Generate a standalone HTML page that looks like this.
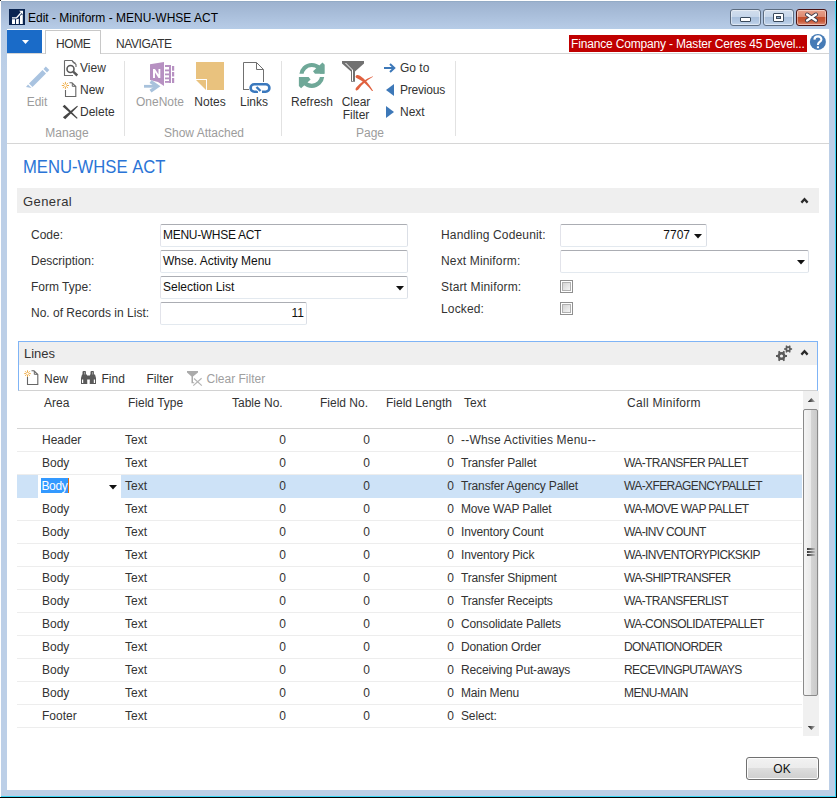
<!DOCTYPE html><html><head><meta charset="utf-8"><style>
html,body{margin:0;padding:0;width:837px;height:798px;overflow:hidden;background:#fff}
body{position:relative;font-family:"Liberation Sans",sans-serif}
body>div,body>svg{position:absolute}
.t{white-space:nowrap}
</style></head><body>
<div style="left:0px;top:0px;width:837px;height:798px;background:#fff"></div>
<div style="left:836px;top:0px;width:1px;height:798px;background:#000"></div>
<div style="left:0px;top:797px;width:837px;height:1px;background:#000"></div>
<div style="left:835px;top:1px;width:1px;height:796px;background:#3ad6f5"></div>
<div style="left:1px;top:796px;width:835px;height:1px;background:#3ad6f5"></div>
<div style="left:0px;top:0px;width:1px;height:1px;background:#222"></div>
<div style="left:1px;top:1px;width:834px;height:795px;background:#bccfe7"></div>
<div style="left:1px;top:1px;width:834px;height:28px;background:linear-gradient(#93abc6 0,#93abc6 1px,#9db2cf 1px,#b6cbe6 27px,#b3cde8 28px)"></div>
<div style="left:1px;top:29px;width:6px;height:40px;background:linear-gradient(#b7cce6,#bccfe7)"></div>
<div style="left:829px;top:29px;width:6px;height:40px;background:linear-gradient(#b7cce6,#bccfe7)"></div>
<div style="left:7px;top:29px;width:822px;height:761px;background:#fff"></div>
<svg style="left:9px;top:9px" width="16" height="16" viewBox="0 0 16 16">
<rect width="16" height="16" fill="#0a2450"/>
<rect x="3" y="10" width="3" height="5" fill="#fff"/><rect x="7" y="9.8" width="2.8" height="5.2" fill="#fff"/><rect x="11" y="5.5" width="2.8" height="9.5" fill="#fff"/>
<path d="M3 9 H7.6 L12.5 3.5" stroke="#0a2450" stroke-width="2.6" fill="none"/><path d="M3 8.8 H7.6 L12.5 3.3" stroke="#fff" stroke-width="1.3" fill="none"/><path d="M10.2 1.8 H14 V5.6 Z" fill="#fff"/></svg>
<div class="t" style="left:28px;top:12px;font-size:12px;line-height:12px;color:#000;">Edit - Miniform - MENU-WHSE ACT</div>
<div style="left:730px;top:9px;width:31px;height:17px;background:linear-gradient(#d2deed 0,#c6d6ea 45%,#a9c0dc 50%,#b4c9e3 80%,#c6d8ee 100%);border:1px solid #5c6c80;border-radius:3px;box-sizing:border-box;box-shadow:inset 0 0 0 1px rgba(255,255,255,0.45)"></div>
<div style="left:763px;top:9px;width:31px;height:17px;background:linear-gradient(#d2deed 0,#c6d6ea 45%,#a9c0dc 50%,#b4c9e3 80%,#c6d8ee 100%);border:1px solid #5c6c80;border-radius:3px;box-sizing:border-box;box-shadow:inset 0 0 0 1px rgba(255,255,255,0.45)"></div>
<div style="left:796px;top:9px;width:31px;height:17px;background:linear-gradient(#e8a08a 0,#dc8a72 45%,#c4502e 50%,#c85a3a 75%,#e0907a 100%);border:1px solid #4a1414;border-radius:3px;box-sizing:border-box;box-shadow:inset 0 0 0 1px rgba(255,255,255,0.45)"></div>
<div style="left:740px;top:17px;width:11px;height:5px;background:#fff;border:1px solid #3a4a5c;border-radius:1px;box-sizing:border-box"></div>
<div style="left:773px;top:13px;width:11px;height:9px;background:#fff;border:1px solid #3a4a5c;border-radius:1px;box-sizing:border-box"></div>
<div style="left:776px;top:16px;width:5px;height:3px;background:#8aa8c8;border:1px solid #3a4a5c;box-sizing:border-box"></div>
<svg style="left:803px;top:11px" width="17" height="13" viewBox="0 0 17 13"><path d="M4 3.5 L13 9.5 M13 3.5 L4 9.5" stroke="#3a3a4a" stroke-width="4" stroke-linecap="round"/><path d="M4 3.5 L13 9.5 M13 3.5 L4 9.5" stroke="#fff" stroke-width="2.2" stroke-linecap="round"/></svg>
<div style="left:7px;top:30px;width:35px;height:23px;background:#1a6bc8"></div>
<svg style="left:21px;top:39px" width="9" height="6" viewBox="0 0 9 6"><path d="M1 1 L8 1 L4.5 5 Z" fill="#fff"/></svg>
<div style="left:7px;top:53px;width:822px;height:1px;background:#d4d4d4"></div>
<div style="left:45px;top:30px;width:56px;height:24px;background:#fff;border:1px solid #c8c8c8;border-bottom:none;box-sizing:border-box"></div>
<div class="t" style="left:56px;top:38px;font-size:12px;line-height:12px;color:#333;letter-spacing:-0.4px">HOME</div>
<div class="t" style="left:116px;top:38px;font-size:12px;line-height:12px;color:#333;letter-spacing:-0.4px">NAVIGATE</div>
<div style="left:569px;top:35px;width:238px;height:17px;background:#c00000"></div>
<div class="t" style="left:571px;top:38px;font-size:12px;line-height:12px;color:#fff;letter-spacing:-0.17px">Finance Company - Master Ceres 45 Devel...</div>
<svg style="left:809px;top:33px" width="18" height="18" viewBox="0 0 18 18"><circle cx="8.9" cy="8.9" r="8" fill="#467bb6"/>
<path d="M5.4 6.6 C5.5 4.5 7 3.4 9 3.4 C11.1 3.4 12.4 4.6 12.4 6.4 C12.4 8.6 9 9.2 9 11.3 V12" stroke="#fff" stroke-width="2.1" fill="none"/><rect x="7.9" y="13.3" width="2.1" height="1.9" fill="#fff"/></svg>
<div style="left:7px;top:143px;width:822px;height:1px;background:#d6d6d6"></div>
<div style="left:124px;top:61px;width:1px;height:75px;background:#e2e2e2"></div>
<div style="left:281px;top:61px;width:1px;height:75px;background:#e2e2e2"></div>
<div style="left:455px;top:61px;width:1px;height:75px;background:#e2e2e2"></div>
<div class="t" style="left:-33px;width:200px;top:127px;font-size:12px;line-height:12px;color:#9c9c9c;text-align:center;">Manage</div>
<div class="t" style="left:104px;width:200px;top:127px;font-size:12px;line-height:12px;color:#9c9c9c;text-align:center;">Show Attached</div>
<div class="t" style="left:270px;width:200px;top:127px;font-size:12px;line-height:12px;color:#9c9c9c;text-align:center;">Page</div>
<svg style="left:20px;top:60px" width="32" height="32" viewBox="0 0 32 32">
<path d="M9 23.5 L22.5 10 L26 13.5 L12.5 27 Z" fill="#a9c3e0"/><path d="M23.5 9 L25.8 6.5 L29.3 10 L27 12.5 Z" fill="#a9c3e0"/><path d="M8 24.5 L11.5 28 L6 27 Z" fill="#a9c3e0"/></svg>
<div class="t" style="left:-63px;width:200px;top:96px;font-size:12px;line-height:12px;color:#9c9c9c;text-align:center;">Edit</div>
<svg style="left:60px;top:58px" width="20" height="20" viewBox="0 0 20 20">
<path d="M4.5 2.5 V17.5 H13" stroke="#6b6b6b" stroke-width="1.1" fill="none"/><path d="M4.5 2.5 H12 L16 6.5 V9" stroke="#6b6b6b" stroke-width="1.1" fill="none"/><path d="M12 2.5 L13.5 5 L15.5 5" stroke="#6b6b6b" stroke-width="1" fill="none"/>
<circle cx="10.5" cy="11" r="3.5" stroke="#fff" stroke-width="3" fill="#fff"/><circle cx="10.5" cy="11" r="3.5" stroke="#595959" stroke-width="1.6" fill="none"/><path d="M13.2 13.7 L17.3 17.5" stroke="#595959" stroke-width="2.4"/></svg>
<div class="t" style="left:80px;top:62px;font-size:12px;line-height:12px;color:#333;">View</div>
<svg style="left:60px;top:80px" width="20" height="20" viewBox="0 0 20 20">
<path d="M5.5 10 V16.5 H15.8 V6.5 L12 2.8 H9.5" stroke="#666" stroke-width="1.1" fill="none"/><path d="M12.3 3 V6.3 H15.6" stroke="#666" stroke-width="1" fill="none"/>
<g stroke="#f0ae48" stroke-width="1"><path d="M5.4 1.9 V9.1 M1.8000000000000003 5.5 H9.0"/><path d="M2.8000000000000003 2.9 L8.0 8.1 M8.0 2.9 L2.8000000000000003 8.1" stroke-width="0.9"/></g><circle cx="5.4" cy="5.5" r="1.2" fill="#fff"/></svg>
<div class="t" style="left:80px;top:84px;font-size:12px;line-height:12px;color:#333;">New</div>
<svg style="left:60px;top:103px" width="20" height="20" viewBox="0 0 20 20">
<path d="M2.6 3.6 L4.6 1.8 L17.6 15 L16.8 15.8 Z" fill="#454545"/><path d="M17.2 2.8 L17.9 3.5 L5.2 16.2 L2.9 14.3 Z" fill="#454545"/></svg>
<div class="t" style="left:80px;top:106px;font-size:12px;line-height:12px;color:#333;">Delete</div>
<svg style="left:138px;top:56px" width="44" height="40" viewBox="0 0 44 40">
<path d="M12 8.2 L26 6 L26 30 L20 26 L12 24 Z" fill="#b791c2"/>
<rect x="27" y="9" width="6" height="2" fill="#b791c2"/><rect x="27" y="13.5" width="6" height="1.8" fill="#b791c2"/><rect x="27" y="17.5" width="6" height="1.8" fill="#b791c2"/><rect x="27" y="21.5" width="6" height="1.8" fill="#b791c2"/><rect x="27" y="25" width="6" height="1.8" fill="#b791c2"/>
<rect x="31" y="9" width="2" height="18" fill="#b791c2"/><rect x="34" y="10" width="2.2" height="4.7" fill="#b791c2"/><rect x="34" y="16" width="2.2" height="4.5" fill="#b791c2"/><rect x="34" y="22" width="2.2" height="5" fill="#b791c2"/>
<path d="M15 22 L15 13 L17 13 L20.5 18.5 L20.5 13 L22.3 13 L22.3 22 L20.5 22 L17 16.5 L17 22 Z" fill="#fff"/>
<path d="M11 24 L21.5 30 L11 36.5 L6 36.5 L6 24 Z" fill="#fff"/>
<path d="M6 30.3 L18 30.3" stroke="#a8c2dc" stroke-width="2.8"/><path d="M12.5 25.5 L19.5 30.3 L12.5 35.2" stroke="#a8c2dc" stroke-width="3.4" fill="none"/></svg>
<div class="t" style="left:60px;width:200px;top:96px;font-size:12px;line-height:12px;color:#9c9c9c;text-align:center;">OneNote</div>
<svg style="left:190px;top:56px" width="40" height="40" viewBox="0 0 40 40">
<path d="M6 6 H34 V34 H17 V23 H6 Z" fill="#e9c27e"/><path d="M6 24 H16 V34 Z" fill="#e9c27e"/></svg>
<div class="t" style="left:110px;width:200px;top:96px;font-size:12px;line-height:12px;color:#333;text-align:center;">Notes</div>
<svg style="left:236px;top:56px" width="40" height="40" viewBox="0 0 40 40">
<path d="M7.5 33.5 L7.5 6.5 L20.5 6.5 L27.5 13.5 L27.5 26" stroke="#707070" stroke-width="1" fill="none"/><path d="M20.5 6.5 L20.5 13.5 L27.5 13.5" stroke="#707070" stroke-width="1" fill="none"/>
<path d="M7 33.5 L13 33.5" stroke="#707070" stroke-width="1"/>
<path d="M24 28.3 L18.3 28.3 A3.7 3.7 0 0 0 18.3 35.7 L22 35.7" stroke="#3a78bd" stroke-width="2.6" fill="none"/>
<path d="M24 28.3 L29.7 28.3 A3.7 3.7 0 0 1 29.7 35.7 L26 35.7" stroke="#3a78bd" stroke-width="2.6" fill="none"/>
<path d="M20.5 31 L24.5 35" stroke="#fff" stroke-width="4.2"/><path d="M20.5 31 L24.5 35" stroke="#3a78bd" stroke-width="2.4"/></svg>
<div class="t" style="left:154px;width:200px;top:96px;font-size:12px;line-height:12px;color:#333;text-align:center;">Links</div>
<svg style="left:294px;top:56px" width="40" height="40" viewBox="0 0 40 40">
<defs><clipPath id="rcu"><rect x="0" y="0" width="40" height="17.8"/></clipPath><clipPath id="rcd"><rect x="0" y="21" width="40" height="19"/></clipPath></defs>
<circle cx="17.8" cy="19.4" r="10.4" stroke="#6fa898" stroke-width="4.2" fill="none" clip-path="url(#rcu)"/>
<circle cx="17.8" cy="19.4" r="10.4" stroke="#6fa898" stroke-width="4.2" fill="none" clip-path="url(#rcd)"/>
<path d="M28.5 6.5 L30.7 8.8 L30.7 17.8 L21 17.8 L19 15.3 Z" fill="#6fa898"/>
<path d="M7.1 32.3 L4.9 30 L4.9 21 L14.6 21 L16.6 23.5 Z" fill="#6fa898"/></svg>
<div class="t" style="left:212px;width:200px;top:96px;font-size:12px;line-height:12px;color:#333;text-align:center;">Refresh</div>
<svg style="left:338px;top:56px" width="40" height="40" viewBox="0 0 40 40">
<path d="M4 5 H26 V7.5 L17 15.5 V25.8 H13 V15.5 L4 7.5 Z" fill="#717171"/><path d="M7.5 7 L14.5 14 V25" stroke="#fff" stroke-width="1" fill="none"/>
<path d="M17.5 20.5 C18 18.5 20 18.5 22 19.8 C27 23 31 28 35 34.8 C34.6 35.2 34.3 35.1 34 34.9 C30 29.8 25 24.8 19.5 22.4 C18.3 22 17.6 21.5 17.5 20.5 Z" fill="#e0613f"/><path d="M34.9 20.2 C35 20.6 34.9 20.9 34.5 21.1 C28.5 24.5 23.5 29 20.8 33 C20 34.3 18.6 34.8 17.9 34.2 C17.2 33.6 17.5 32.6 18.3 31.6 C22 27 27.5 23 34.9 20.2 Z" fill="#e0613f"/></svg>
<div class="t" style="left:256px;width:200px;top:96px;font-size:12px;line-height:12px;color:#333;text-align:center;">Clear</div>
<div class="t" style="left:256px;width:200px;top:109px;font-size:12px;line-height:12px;color:#333;text-align:center;">Filter</div>
<svg style="left:383px;top:63px" width="13" height="10" viewBox="0 0 13 10"><path d="M1 5 L11 5" stroke="#3d78b8" stroke-width="2"/><path d="M7 1 L11.3 5 L7 9" stroke="#3d78b8" stroke-width="2" fill="none"/></svg>
<div class="t" style="left:400px;top:62px;font-size:12px;line-height:12px;color:#333;">Go to</div>
<svg style="left:385px;top:83px" width="10" height="14" viewBox="0 0 10 14"><path d="M9 1 L9 13 L1 7 Z" fill="#3d78b8"/></svg>
<div class="t" style="left:400px;top:84px;font-size:12px;line-height:12px;color:#333;letter-spacing:-0.2px">Previous</div>
<svg style="left:385px;top:105px" width="10" height="14" viewBox="0 0 10 14"><path d="M1 1 L1 13 L9 7 Z" fill="#3d78b8"/></svg>
<div class="t" style="left:400px;top:106px;font-size:12px;line-height:12px;color:#333;">Next</div>
<div class="t" style="left:22.5px;top:158px;font-size:18px;line-height:18px;color:#2a74d6;transform:scaleX(0.925);transform-origin:0 0;word-spacing:1px">MENU-WHSE ACT</div>
<div style="left:17px;top:188px;width:802px;height:25px;background:#efefef"></div>
<div class="t" style="left:23px;top:195px;font-size:13px;line-height:13px;color:#333;letter-spacing:0.4px">General</div>
<svg style="left:800px;top:197px" width="9" height="7" viewBox="0 0 9 7"><path d="M1.4 5.6 L4.5 2.3 L7.6 5.6" stroke="#2a2a2a" stroke-width="2.3" fill="none"/></svg>
<div class="t" style="left:31px;top:229px;font-size:12px;line-height:12px;color:#333;">Code:</div>
<div class="t" style="left:31px;top:255px;font-size:12px;line-height:12px;color:#333;">Description:</div>
<div class="t" style="left:31px;top:281px;font-size:12px;line-height:12px;color:#333;">Form Type:</div>
<div class="t" style="left:31px;top:307px;font-size:12px;line-height:12px;color:#333;">No. of Records in List:</div>
<div style="left:160px;top:224px;width:248px;height:23px;background:#fff;border:1px solid;border-color:#abadb3 #dbdfe6 #e3e9ef #e2e3ea;border-radius:2px;box-sizing:border-box"></div>
<div style="left:160px;top:250px;width:248px;height:23px;background:#fff;border:1px solid;border-color:#abadb3 #dbdfe6 #e3e9ef #e2e3ea;border-radius:2px;box-sizing:border-box"></div>
<div style="left:160px;top:276px;width:248px;height:23px;background:#fff;border:1px solid;border-color:#abadb3 #dbdfe6 #e3e9ef #e2e3ea;border-radius:2px;box-sizing:border-box"></div>
<div style="left:160px;top:302px;width:147px;height:23px;background:#fff;border:1px solid;border-color:#abadb3 #dbdfe6 #e3e9ef #e2e3ea;border-radius:2px;box-sizing:border-box"></div>
<div class="t" style="left:163px;top:229px;font-size:12px;line-height:12px;color:#111;letter-spacing:-0.3px">MENU-WHSE ACT</div>
<div class="t" style="left:163px;top:255px;font-size:12px;line-height:12px;color:#111;">Whse. Activity Menu</div>
<div class="t" style="left:163px;top:281px;font-size:12px;line-height:12px;color:#111;">Selection List</div>
<svg style="left:396px;top:286px" width="8" height="5" viewBox="0 0 8 5"><path d="M0 0 L8 0 L4 4.5 Z" fill="#111"/></svg>
<div class="t" style="right:533px;top:307px;font-size:12px;line-height:12px;color:#111;text-align:right;">11</div>
<div class="t" style="left:441px;top:229px;font-size:12px;line-height:12px;color:#333;letter-spacing:0.15px">Handling Codeunit:</div>
<div class="t" style="left:441px;top:255px;font-size:12px;line-height:12px;color:#333;letter-spacing:0.15px">Next Miniform:</div>
<div class="t" style="left:441px;top:281px;font-size:12px;line-height:12px;color:#333;letter-spacing:0.15px">Start Miniform:</div>
<div class="t" style="left:441px;top:303px;font-size:12px;line-height:12px;color:#333;letter-spacing:0.15px">Locked:</div>
<div style="left:560px;top:224px;width:147px;height:23px;background:#fff;border:1px solid;border-color:#abadb3 #dbdfe6 #e3e9ef #e2e3ea;border-radius:2px;box-sizing:border-box"></div>
<div style="left:560px;top:250px;width:249px;height:23px;background:#fff;border:1px solid;border-color:#abadb3 #dbdfe6 #e3e9ef #e2e3ea;border-radius:2px;box-sizing:border-box"></div>
<div class="t" style="right:147px;top:229px;font-size:12px;line-height:12px;color:#111;text-align:right;">7707</div>
<svg style="left:694px;top:234px" width="8" height="5" viewBox="0 0 8 5"><path d="M0 0 L8 0 L4 4.5 Z" fill="#111"/></svg>
<svg style="left:797px;top:260px" width="8" height="5" viewBox="0 0 8 5"><path d="M0 0 L8 0 L4 4.5 Z" fill="#111"/></svg>
<div style="left:560px;top:280px;width:13px;height:13px;border:1px solid #8f8f8f;box-sizing:border-box;background:#fff"></div>
<div style="left:562px;top:282px;width:9px;height:9px;background:linear-gradient(135deg,#d4d4d4,#f4f4f4);border:1px solid #b0b0b0;box-sizing:border-box"></div>
<div style="left:560px;top:302px;width:13px;height:13px;border:1px solid #8f8f8f;box-sizing:border-box;background:#fff"></div>
<div style="left:562px;top:304px;width:9px;height:9px;background:linear-gradient(135deg,#d4d4d4,#f4f4f4);border:1px solid #b0b0b0;box-sizing:border-box"></div>
<div style="left:18px;top:341px;width:800px;height:50px;border:1px solid #7fb4f6;border-bottom:1px solid #d2d2d2;box-sizing:border-box;background:#fff"></div>
<div style="left:19px;top:342px;width:798px;height:23px;background:#efefef"></div>
<div class="t" style="left:24px;top:347px;font-size:13px;line-height:13px;color:#333;">Lines</div>
<svg style="left:770px;top:340px" width="30" height="26" viewBox="0 0 30 26"><circle cx="11.5" cy="16" r="2.9" stroke="#5c5c5c" stroke-width="2.0" fill="none"/><rect x="6.0" y="15.0" width="11.0" height="2.0" fill="#5c5c5c" transform="rotate(0 11.5 16)"/><rect x="6.0" y="15.0" width="11.0" height="2.0" fill="#5c5c5c" transform="rotate(60 11.5 16)"/><rect x="6.0" y="15.0" width="11.0" height="2.0" fill="#5c5c5c" transform="rotate(120 11.5 16)"/><circle cx="11.5" cy="16" r="1.6" fill="#efefef"/><circle cx="18.1" cy="9" r="2.0" stroke="#5c5c5c" stroke-width="1.6" fill="none"/><rect x="14.100000000000001" y="8.2" width="8.0" height="1.6" fill="#5c5c5c" transform="rotate(0 18.1 9)"/><rect x="14.100000000000001" y="8.2" width="8.0" height="1.6" fill="#5c5c5c" transform="rotate(60 18.1 9)"/><rect x="14.100000000000001" y="8.2" width="8.0" height="1.6" fill="#5c5c5c" transform="rotate(120 18.1 9)"/><circle cx="18.1" cy="9" r="1.0" fill="#efefef"/></svg>
<svg style="left:800px;top:349px" width="9" height="7" viewBox="0 0 9 7"><path d="M1.4 5.6 L4.5 2.3 L7.6 5.6" stroke="#2a2a2a" stroke-width="2.3" fill="none"/></svg>
<svg style="left:22px;top:368px" width="20" height="20" viewBox="0 0 20 20">
<path d="M5.5 9 V16.5 H15.8 V6.5 L12 2.8 H9.5" stroke="#666" stroke-width="1.1" fill="none"/><path d="M12.3 3 V6.3 H15.6" stroke="#666" stroke-width="1" fill="none"/>
<g stroke="#f0ae48" stroke-width="1"><path d="M5.5 2.3 V8.899999999999999 M2.2 5.6 H8.8"/><path d="M3.1 3.1999999999999997 L7.9 8.0 M7.9 3.1999999999999997 L3.1 8.0" stroke-width="0.9"/></g><circle cx="5.5" cy="5.6" r="1.2" fill="#fff"/></svg>
<div class="t" style="left:44px;top:373px;font-size:12px;line-height:12px;color:#333;">New</div>
<svg style="left:80px;top:370px" width="17" height="15" viewBox="0 0 17 15"><g fill="#5a5a5a">
<rect x="2.5" y="1" width="3.5" height="4.5" rx="1"/><rect x="10.5" y="1" width="3.5" height="4.5" rx="1"/>
<path d="M2 4.5 L7 4.5 L7.3 14 L1 14 L1 8 Z"/><path d="M10 4.5 L15 4.5 L16 8 L16 14 L9.7 14 Z"/><rect x="6.5" y="5.5" width="4" height="4"/></g>
<rect x="2" y="9.5" width="1.2" height="3.5" fill="#fff"/><rect x="13.8" y="9.5" width="1.2" height="3.5" fill="#fff"/><rect x="4.2" y="2" width="1" height="2.5" fill="#aaa"/><rect x="12.2" y="2" width="1" height="2.5" fill="#aaa"/></svg>
<div class="t" style="left:101.5px;top:373px;font-size:12px;line-height:12px;color:#333;">Find</div>
<div class="t" style="left:146.5px;top:373px;font-size:12px;line-height:12px;color:#333;">Filter</div>
<svg style="left:182px;top:366px" width="24" height="24" viewBox="0 0 24 24">
<path d="M5 5 H16 V6.5 L11 10.5 V16.3 H12.2 V17.2 H9.5 V10.5 L5 6.5 Z" fill="#aaaaaa"/>
<path d="M12 12.5 L19.8 19.6 M19.6 12.2 L11.3 19.6" stroke="#b4b4b4" stroke-width="1.2"/></svg>
<div class="t" style="left:206.5px;top:373px;font-size:12px;line-height:12px;color:#a0a0a0;">Clear Filter</div>
<div class="t" style="left:44px;top:397px;font-size:12px;line-height:12px;color:#333;">Area</div>
<div class="t" style="left:128px;top:397px;font-size:12px;line-height:12px;color:#333;">Field Type</div>
<div class="t" style="left:232px;top:397px;font-size:12px;line-height:12px;color:#333;">Table No.</div>
<div class="t" style="left:320px;top:397px;font-size:12px;line-height:12px;color:#333;">Field No.</div>
<div class="t" style="left:386px;top:397px;font-size:12px;line-height:12px;color:#333;">Field Length</div>
<div class="t" style="left:464px;top:397px;font-size:12px;line-height:12px;color:#333;">Text</div>
<div class="t" style="left:627px;top:397px;font-size:12px;line-height:12px;color:#333;letter-spacing:0.3px">Call Miniform</div>
<div style="left:17px;top:428px;width:785px;height:1px;background:#d4d4d4"></div>
<div class="t" style="left:42px;top:434px;font-size:12px;line-height:12px;color:#333;">Header</div>
<div style="left:17px;top:451px;width:785px;height:1px;background:#ededed"></div>
<div class="t" style="left:125px;top:434px;font-size:12px;line-height:12px;color:#333;">Text</div>
<div class="t" style="right:551px;top:434px;font-size:12px;line-height:12px;color:#333;text-align:right;">0</div>
<div class="t" style="right:467px;top:434px;font-size:12px;line-height:12px;color:#333;text-align:right;">0</div>
<div class="t" style="right:383px;top:434px;font-size:12px;line-height:12px;color:#333;text-align:right;">0</div>
<div class="t" style="left:461px;top:434px;font-size:12px;line-height:12px;color:#333;letter-spacing:0.2px">--Whse Activities Menu--</div>
<div class="t" style="left:42px;top:457px;font-size:12px;line-height:12px;color:#333;">Body</div>
<div style="left:17px;top:474px;width:785px;height:1px;background:#ededed"></div>
<div class="t" style="left:125px;top:457px;font-size:12px;line-height:12px;color:#333;">Text</div>
<div class="t" style="right:551px;top:457px;font-size:12px;line-height:12px;color:#333;text-align:right;">0</div>
<div class="t" style="right:467px;top:457px;font-size:12px;line-height:12px;color:#333;text-align:right;">0</div>
<div class="t" style="right:383px;top:457px;font-size:12px;line-height:12px;color:#333;text-align:right;">0</div>
<div class="t" style="left:461px;top:457px;font-size:12px;line-height:12px;color:#333;letter-spacing:-0.15px">Transfer Pallet</div>
<div class="t" style="left:624px;top:457px;font-size:12px;line-height:12px;color:#333;letter-spacing:-0.6px">WA-TRANSFER PALLET</div>
<div style="left:17px;top:475px;width:785px;height:23px;background:#cde2f7"></div>
<div style="left:38px;top:475px;width:83px;height:23px;background:#fff"></div>
<div style="left:41px;top:478px;width:27px;height:15px;background:#3399ff"></div>
<div style="left:68px;top:478px;width:1px;height:15px;background:#e07010"></div>
<div class="t" style="left:41.5px;top:480px;font-size:12px;line-height:12px;color:#fff;letter-spacing:-0.4px">Body</div>
<svg style="left:109px;top:485px" width="8" height="5" viewBox="0 0 8 5"><path d="M0 0 L8 0 L4 4.5 Z" fill="#111"/></svg>
<div class="t" style="left:125px;top:480px;font-size:12px;line-height:12px;color:#333;">Text</div>
<div class="t" style="right:551px;top:480px;font-size:12px;line-height:12px;color:#333;text-align:right;">0</div>
<div class="t" style="right:467px;top:480px;font-size:12px;line-height:12px;color:#333;text-align:right;">0</div>
<div class="t" style="right:383px;top:480px;font-size:12px;line-height:12px;color:#333;text-align:right;">0</div>
<div class="t" style="left:461px;top:480px;font-size:12px;line-height:12px;color:#333;letter-spacing:-0.15px">Transfer Agency Pallet</div>
<div class="t" style="left:624px;top:480px;font-size:12px;line-height:12px;color:#333;letter-spacing:-0.6px">WA-XFERAGENCYPALLET</div>
<div class="t" style="left:42px;top:503px;font-size:12px;line-height:12px;color:#333;">Body</div>
<div style="left:17px;top:520px;width:785px;height:1px;background:#ededed"></div>
<div class="t" style="left:125px;top:503px;font-size:12px;line-height:12px;color:#333;">Text</div>
<div class="t" style="right:551px;top:503px;font-size:12px;line-height:12px;color:#333;text-align:right;">0</div>
<div class="t" style="right:467px;top:503px;font-size:12px;line-height:12px;color:#333;text-align:right;">0</div>
<div class="t" style="right:383px;top:503px;font-size:12px;line-height:12px;color:#333;text-align:right;">0</div>
<div class="t" style="left:461px;top:503px;font-size:12px;line-height:12px;color:#333;letter-spacing:-0.15px">Move WAP Pallet</div>
<div class="t" style="left:624px;top:503px;font-size:12px;line-height:12px;color:#333;letter-spacing:-0.6px">WA-MOVE WAP PALLET</div>
<div class="t" style="left:42px;top:526px;font-size:12px;line-height:12px;color:#333;">Body</div>
<div style="left:17px;top:543px;width:785px;height:1px;background:#ededed"></div>
<div class="t" style="left:125px;top:526px;font-size:12px;line-height:12px;color:#333;">Text</div>
<div class="t" style="right:551px;top:526px;font-size:12px;line-height:12px;color:#333;text-align:right;">0</div>
<div class="t" style="right:467px;top:526px;font-size:12px;line-height:12px;color:#333;text-align:right;">0</div>
<div class="t" style="right:383px;top:526px;font-size:12px;line-height:12px;color:#333;text-align:right;">0</div>
<div class="t" style="left:461px;top:526px;font-size:12px;line-height:12px;color:#333;letter-spacing:-0.15px">Inventory Count</div>
<div class="t" style="left:624px;top:526px;font-size:12px;line-height:12px;color:#333;letter-spacing:-0.6px">WA-INV COUNT</div>
<div class="t" style="left:42px;top:549px;font-size:12px;line-height:12px;color:#333;">Body</div>
<div style="left:17px;top:566px;width:785px;height:1px;background:#ededed"></div>
<div class="t" style="left:125px;top:549px;font-size:12px;line-height:12px;color:#333;">Text</div>
<div class="t" style="right:551px;top:549px;font-size:12px;line-height:12px;color:#333;text-align:right;">0</div>
<div class="t" style="right:467px;top:549px;font-size:12px;line-height:12px;color:#333;text-align:right;">0</div>
<div class="t" style="right:383px;top:549px;font-size:12px;line-height:12px;color:#333;text-align:right;">0</div>
<div class="t" style="left:461px;top:549px;font-size:12px;line-height:12px;color:#333;letter-spacing:-0.15px">Inventory Pick</div>
<div class="t" style="left:624px;top:549px;font-size:12px;line-height:12px;color:#333;letter-spacing:-0.6px">WA-INVENTORYPICKSKIP</div>
<div class="t" style="left:42px;top:572px;font-size:12px;line-height:12px;color:#333;">Body</div>
<div style="left:17px;top:589px;width:785px;height:1px;background:#ededed"></div>
<div class="t" style="left:125px;top:572px;font-size:12px;line-height:12px;color:#333;">Text</div>
<div class="t" style="right:551px;top:572px;font-size:12px;line-height:12px;color:#333;text-align:right;">0</div>
<div class="t" style="right:467px;top:572px;font-size:12px;line-height:12px;color:#333;text-align:right;">0</div>
<div class="t" style="right:383px;top:572px;font-size:12px;line-height:12px;color:#333;text-align:right;">0</div>
<div class="t" style="left:461px;top:572px;font-size:12px;line-height:12px;color:#333;letter-spacing:-0.15px">Transfer Shipment</div>
<div class="t" style="left:624px;top:572px;font-size:12px;line-height:12px;color:#333;letter-spacing:-0.6px">WA-SHIPTRANSFER</div>
<div class="t" style="left:42px;top:595px;font-size:12px;line-height:12px;color:#333;">Body</div>
<div style="left:17px;top:612px;width:785px;height:1px;background:#ededed"></div>
<div class="t" style="left:125px;top:595px;font-size:12px;line-height:12px;color:#333;">Text</div>
<div class="t" style="right:551px;top:595px;font-size:12px;line-height:12px;color:#333;text-align:right;">0</div>
<div class="t" style="right:467px;top:595px;font-size:12px;line-height:12px;color:#333;text-align:right;">0</div>
<div class="t" style="right:383px;top:595px;font-size:12px;line-height:12px;color:#333;text-align:right;">0</div>
<div class="t" style="left:461px;top:595px;font-size:12px;line-height:12px;color:#333;letter-spacing:-0.15px">Transfer Receipts</div>
<div class="t" style="left:624px;top:595px;font-size:12px;line-height:12px;color:#333;letter-spacing:-0.6px">WA-TRANSFERLIST</div>
<div class="t" style="left:42px;top:618px;font-size:12px;line-height:12px;color:#333;">Body</div>
<div style="left:17px;top:635px;width:785px;height:1px;background:#ededed"></div>
<div class="t" style="left:125px;top:618px;font-size:12px;line-height:12px;color:#333;">Text</div>
<div class="t" style="right:551px;top:618px;font-size:12px;line-height:12px;color:#333;text-align:right;">0</div>
<div class="t" style="right:467px;top:618px;font-size:12px;line-height:12px;color:#333;text-align:right;">0</div>
<div class="t" style="right:383px;top:618px;font-size:12px;line-height:12px;color:#333;text-align:right;">0</div>
<div class="t" style="left:461px;top:618px;font-size:12px;line-height:12px;color:#333;letter-spacing:-0.15px">Consolidate Pallets</div>
<div class="t" style="left:624px;top:618px;font-size:12px;line-height:12px;color:#333;letter-spacing:-0.6px">WA-CONSOLIDATEPALLET</div>
<div class="t" style="left:42px;top:641px;font-size:12px;line-height:12px;color:#333;">Body</div>
<div style="left:17px;top:658px;width:785px;height:1px;background:#ededed"></div>
<div class="t" style="left:125px;top:641px;font-size:12px;line-height:12px;color:#333;">Text</div>
<div class="t" style="right:551px;top:641px;font-size:12px;line-height:12px;color:#333;text-align:right;">0</div>
<div class="t" style="right:467px;top:641px;font-size:12px;line-height:12px;color:#333;text-align:right;">0</div>
<div class="t" style="right:383px;top:641px;font-size:12px;line-height:12px;color:#333;text-align:right;">0</div>
<div class="t" style="left:461px;top:641px;font-size:12px;line-height:12px;color:#333;letter-spacing:-0.15px">Donation Order</div>
<div class="t" style="left:624px;top:641px;font-size:12px;line-height:12px;color:#333;letter-spacing:-0.6px">DONATIONORDER</div>
<div class="t" style="left:42px;top:664px;font-size:12px;line-height:12px;color:#333;">Body</div>
<div style="left:17px;top:681px;width:785px;height:1px;background:#ededed"></div>
<div class="t" style="left:125px;top:664px;font-size:12px;line-height:12px;color:#333;">Text</div>
<div class="t" style="right:551px;top:664px;font-size:12px;line-height:12px;color:#333;text-align:right;">0</div>
<div class="t" style="right:467px;top:664px;font-size:12px;line-height:12px;color:#333;text-align:right;">0</div>
<div class="t" style="right:383px;top:664px;font-size:12px;line-height:12px;color:#333;text-align:right;">0</div>
<div class="t" style="left:461px;top:664px;font-size:12px;line-height:12px;color:#333;letter-spacing:-0.15px">Receiving Put-aways</div>
<div class="t" style="left:624px;top:664px;font-size:12px;line-height:12px;color:#333;letter-spacing:-0.6px">RECEVINGPUTAWAYS</div>
<div class="t" style="left:42px;top:687px;font-size:12px;line-height:12px;color:#333;">Body</div>
<div style="left:17px;top:704px;width:785px;height:1px;background:#ededed"></div>
<div class="t" style="left:125px;top:687px;font-size:12px;line-height:12px;color:#333;">Text</div>
<div class="t" style="right:551px;top:687px;font-size:12px;line-height:12px;color:#333;text-align:right;">0</div>
<div class="t" style="right:467px;top:687px;font-size:12px;line-height:12px;color:#333;text-align:right;">0</div>
<div class="t" style="right:383px;top:687px;font-size:12px;line-height:12px;color:#333;text-align:right;">0</div>
<div class="t" style="left:461px;top:687px;font-size:12px;line-height:12px;color:#333;letter-spacing:-0.15px">Main Menu</div>
<div class="t" style="left:624px;top:687px;font-size:12px;line-height:12px;color:#333;letter-spacing:-0.6px">MENU-MAIN</div>
<div class="t" style="left:42px;top:710px;font-size:12px;line-height:12px;color:#333;">Footer</div>
<div style="left:17px;top:727px;width:785px;height:1px;background:#ededed"></div>
<div class="t" style="left:125px;top:710px;font-size:12px;line-height:12px;color:#333;">Text</div>
<div class="t" style="right:551px;top:710px;font-size:12px;line-height:12px;color:#333;text-align:right;">0</div>
<div class="t" style="right:467px;top:710px;font-size:12px;line-height:12px;color:#333;text-align:right;">0</div>
<div class="t" style="right:383px;top:710px;font-size:12px;line-height:12px;color:#333;text-align:right;">0</div>
<div class="t" style="left:461px;top:710px;font-size:12px;line-height:12px;color:#333;letter-spacing:-0.15px">Select:</div>
<div style="left:803px;top:391px;width:16px;height:345px;background:#f0f0f0"></div>
<svg style="left:807px;top:397px" width="10" height="6" viewBox="0 0 10 6"><defs><linearGradient id="sa" x1="0" x2="1"><stop offset="0" stop-color="#111"/><stop offset="1" stop-color="#bbb"/></linearGradient></defs><path d="M0.8 5 L4.4 1 L8.3 5 Z" fill="url(#sa)"/></svg>
<svg style="left:807px;top:725px" width="10" height="6" viewBox="0 0 10 6"><path d="M0.8 1 L4.4 5 L8.3 1 Z" fill="url(#sa)"/></svg>
<div style="left:803px;top:409px;width:15px;height:287px;background:linear-gradient(90deg,#f4f4f4 0,#eaeaea 50%,#d4d4d4 55%,#cacaca 100%);border:1px solid #8a8a8a;border-radius:2px;box-sizing:border-box"></div>
<div style="left:807px;top:548px;width:8px;height:2px;background:linear-gradient(90deg,#333,#bbb)"></div>
<div style="left:807px;top:551px;width:8px;height:2px;background:linear-gradient(90deg,#333,#bbb)"></div>
<div style="left:807px;top:554px;width:8px;height:2px;background:linear-gradient(90deg,#333,#bbb)"></div>
<div style="left:746px;top:757px;width:73px;height:23px;background:linear-gradient(#f2f2f2 0,#ebebeb 50%,#dddddd 50%,#cfcfcf 100%);border:1px solid #707070;border-radius:3px;box-sizing:border-box;box-shadow:inset 0 0 0 1px #fcfcfc"></div>
<div class="t" style="left:682px;width:200px;top:763px;font-size:12px;line-height:12px;color:#111;text-align:center;">OK</div>
</body></html>
